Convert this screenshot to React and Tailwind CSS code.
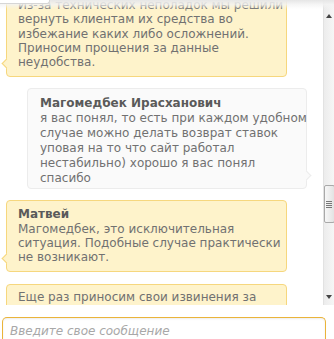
import React from 'react';

const font = { fontFamily: '"DejaVu Sans", Verdana, sans-serif' };

const YellowBubble = ({ name, lines, className = '' }) => (
  <div className={`relative ml-[6px] w-[281px] rounded-[4px] border border-[#f6d77e] bg-[#fef3cb] pl-[11px] pr-2 text-[12px] leading-[14.3px] text-[#717171] ${className}`}>
    {name && <div className="font-bold text-[#5a5a5a]">{name}</div>}
    {lines.map((l, i) => (
      <div key={i} className="whitespace-nowrap">{l}</div>
    ))}
    {/* tail */}
    <div className="absolute bottom-[9px] left-[-4px] h-[7px] w-[7px] rotate-45 border-b border-l border-[#f6d77e] bg-[#fef3cb]" />
  </div>
);

const GrayBubble = ({ name, lines }) => (
  <div className="relative ml-[27px] w-[280px] rounded-[4px] border border-[#ececec] bg-[#fafafa] pl-[12px] pr-2 pt-[7px] pb-[2px] text-[12px] leading-[15px] text-[#717171]">
    <div className="font-bold text-[#5a5a5a]">{name}</div>
    {lines.map((l, i) => (
      <div key={i} className="whitespace-nowrap">{l}</div>
    ))}
    <div className="absolute bottom-[9px] right-[-4px] h-[7px] w-[7px] rotate-45 border-t border-r border-[#ececec] bg-[#fafafa]" />
  </div>
);

const Scrollbar = () => (
  <div className="flex w-[11px] flex-col items-center border-l border-[#e2e2e2] bg-gradient-to-r from-[#ececec] to-[#f6f6f6]">
    <div className="h-[14px]" />
    <div className="h-0 w-0 border-x-[3.5px] border-b-[4px] border-x-transparent border-b-[#444]" />
    <div className="h-[167px]" />
    <div className="flex h-[38px] w-[11px] flex-col items-center justify-center gap-[1px] rounded-[2px] border border-[#a9a9a9] bg-gradient-to-r from-[#f7f7f7] to-[#e3e3e3]">
      <div className="h-px w-[6px] bg-[#777]" />
      <div className="h-px w-[6px] bg-[#777]" />
      <div className="h-px w-[6px] bg-[#777]" />
      <div className="h-px w-[6px] bg-[#777]" />
    </div>
    <div className="flex-1" />
    <div className="mb-[6px] h-0 w-0 border-x-[3.5px] border-t-[4px] border-x-transparent border-t-[#444]" />
  </div>
);

export default function App() {
  return (
    <div className="flex h-[339px] w-[334px] flex-col overflow-hidden bg-white" style={font}>
      <div className="relative flex h-[305px]">
        <div className="flex-1 overflow-hidden">
          <div className="mt-[-9px] flex flex-col gap-[11px]">
            <YellowBubble
              className="pt-[6px] pb-[7px]"
              lines={[
                'Из-за технических неполадок мы решили',
                'вернуть клиентам их средства во',
                'избежание каких либо осложнений.',
                'Приносим прощения за данные',
                'неудобства.',
              ]}
            />
            <GrayBubble
              name="Магомедбек Ирасханович"
              lines={[
                'я вас понял, то есть при каждом удобном',
                'случае можно делать возврат ставок',
                'уповая на то что сайт работал',
                'нестабильно) хорошо я вас понял',
                'спасибо',
              ]}
            />
            <YellowBubble
              className="pt-[6px] pb-[6px]"
              name="Матвей"
              lines={[
                'Магомедбек, это исключительная',
                'ситуация. Подобные случае практически',
                'не возникают.',
              ]}
            />
            <YellowBubble
              className="mt-px pt-[5px] pb-[6px]"
              lines={['Еще раз приносим свои извинения за', 'неудобства.']}
            />
          </div>
        </div>
        <Scrollbar />
        {/* top shade */}
        <div className="pointer-events-none absolute left-0 right-0 top-0 h-[9px] bg-gradient-to-b from-[#e6e6e6] via-[#f3f3f3]/80 to-transparent" />
        <div className="absolute left-0 top-0 h-[4px] w-[50px] rounded-br-[3px] border-b border-r border-[#d6d6d6] bg-white" />
      </div>
      <div className="flex-1 bg-white pl-[2px] pr-[8px] pt-[12px]">
        <div className="h-[30px] rounded-t-[5px] border-[1.5px] border-b-0 border-[#eab43a] bg-white px-[7px] pt-[5px] text-[12px] leading-[16px] italic text-[#a8a8a8] shadow-[inset_0_1px_2px_rgba(0,0,0,0.08)]">
          Введите свое сообщение
        </div>
      </div>
    </div>
  );
}
